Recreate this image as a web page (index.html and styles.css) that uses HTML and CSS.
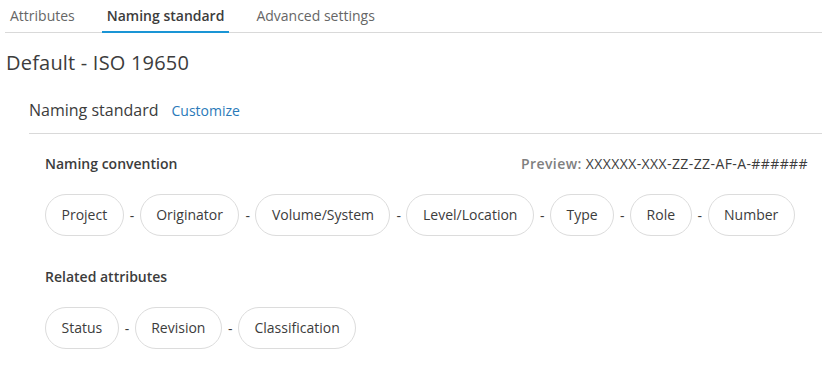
FILE: index.html
```html
<!DOCTYPE html>
<html>
<head>
    <title>Naming standard</title>
    <link rel="stylesheet" href="styles.css">
</head>
<body>
    <div class="tabs">
        <div class="tab">Attributes</div>
        <div class="tab active">Naming standard</div>
        <div class="tab">Advanced settings</div>
    </div>

    <h1 class="title">Default - ISO 19650</h1>

    <div class="section">
        <div class="section-head">
            <span class="section-title">Naming standard</span>
            <a class="link" href="#">Customize</a>
        </div>

        <div class="section-body">
            <div class="row-head">
                <span class="label">Naming convention</span>
                <span class="preview"><b>Preview:</b> XXXXXX-XXX-ZZ-ZZ-AF-A-######</span>
            </div>
            <div class="chips">
                <span class="chip">Project</span><span class="sep">-</span>
                <span class="chip">Originator</span><span class="sep">-</span>
                <span class="chip">Volume/System</span><span class="sep">-</span>
                <span class="chip">Level/Location</span><span class="sep">-</span>
                <span class="chip">Type</span><span class="sep">-</span>
                <span class="chip">Role</span><span class="sep">-</span>
                <span class="chip">Number</span>
            </div>

            <div class="row-head">
                <span class="label">Related attributes</span>
            </div>
            <div class="chips">
                <span class="chip">Status</span><span class="sep">-</span>
                <span class="chip">Revision</span><span class="sep">-</span>
                <span class="chip">Classification</span>
            </div>
        </div>
    </div>
</body>
</html>
```

FILE: styles.css
```css
body {
    margin: 0;
    background-color: #fff;
    color: #3c3c3c;
    font-family: "Open Sans", "Noto Sans", sans-serif;
}

/* Pestañas */
.tabs {
    display: flex;
    gap: 22px;
    height: 32px;
    margin-left: 5px;
    border-bottom: 1px solid #d9d9d9;
}

.tab {
    box-sizing: border-box;
    height: 33px;
    margin-bottom: -1px;
    padding: 6px 5px 0;
    font-size: 14px;
    color: #666;
    border-bottom: 2px solid transparent;
}

.tab.active {
    color: #3c3c3c;
    font-weight: 600;
    border-bottom-color: #1a95d5;
}

.title {
    margin: 16px 0 0 6px;
    font-size: 20px;
    font-weight: 400;
    line-height: 28px;
    letter-spacing: 0.2px;
}

.section {
    margin: 21px 0 0 29px;
}

.section-head {
    display: flex;
    align-items: baseline;
    gap: 13px;
    height: 34px;
    padding-top: 1px;
    border-bottom: 1px solid #d9d9d9;
}

.section-title {
    font-size: 16px;
}

.link {
    font-size: 14px;
    color: #2a7ab9;
    text-decoration: none;
}

.section-body {
    padding: 18px 14px 0 16px;
}

.row-head {
    display: flex;
    justify-content: space-between;
    align-items: center;
    height: 22px;
    font-size: 14px;
}

.label {
    font-weight: 600;
}

.preview {
    color: #3c3c3c;
    letter-spacing: 0.4px;
}

.preview b {
    font-weight: 600;
    color: #808080;
}

.chips {
    display: flex;
    align-items: center;
    gap: 6px;
    margin: 20px 0 29px;
}

.chip {
    box-sizing: border-box;
    height: 42px;
    padding: 0 15.5px;
    line-height: 40px;
    font-size: 14px;
    border: 1px solid #dcdcdc;
    border-radius: 21px;
}

.sep {
    width: 4px;
    font-size: 14px;
    text-align: center;
}
```
